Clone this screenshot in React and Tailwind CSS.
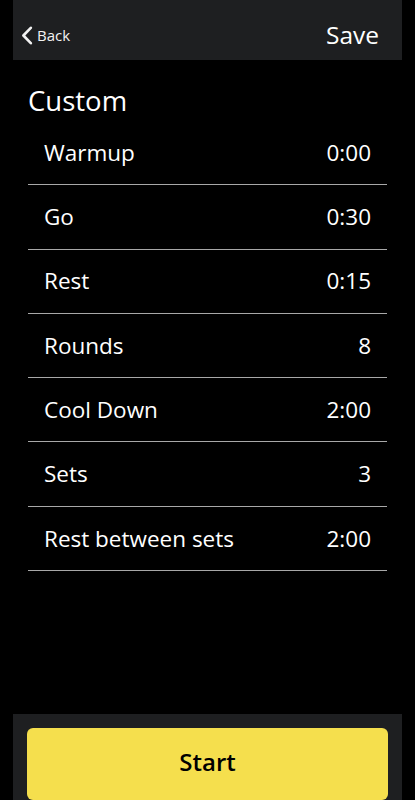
const rows = [
  { label: 'Warmup', value: '0:00' },
  { label: 'Go', value: '0:30' },
  { label: 'Rest', value: '0:15' },
  { label: 'Rounds', value: '8' },
  { label: 'Cool Down', value: '2:00' },
  { label: 'Sets', value: '3' },
  { label: 'Rest between sets', value: '2:00' },
]

export default function App() {
  return (
    <div
      className="h-[800px] bg-black text-white flex flex-col overflow-hidden"
      style={{ fontFamily: '"Open Sans", "Noto Sans", sans-serif' }}
    >
      {/* top bar */}
      <div className="mx-[13px] h-[60px] bg-[#1e1f21] flex items-center justify-between pt-[10px] pl-[8px] pr-[23px] shrink-0">
        <button className="flex items-center gap-[4px] text-[15px] text-[#f2f2f2]">
          <svg width="12" height="19" viewBox="0 0 12 19" fill="none" stroke="currentColor" strokeWidth="2.6" strokeLinecap="round" strokeLinejoin="round">
            <path d="M9.8 1.8 L2.4 9.5 L9.8 17.2" />
          </svg>
          <span>Back</span>
        </button>
        <button className="text-[24.5px] leading-none">Save</button>
      </div>

      {/* settings */}
      <div className="px-[28px] pt-[20px]">
        <h1 className="text-[27.5px] leading-[41px] font-normal">Custom</h1>
        <ul>
          {rows.map((r) => (
            <li
              key={r.label}
              className="h-[64.3px] flex items-center justify-between px-[16px] border-b border-[#a8a8a8] text-[22.5px]"
            >
              <span>{r.label}</span>
              <span>{r.value}</span>
            </li>
          ))}
        </ul>
      </div>

      {/* bottom */}
      <div className="mt-auto mx-[13px] h-[86px] bg-[#1e1f21] px-[14px] pt-[14px] shrink-0">
        <button className="w-full h-[72px] rounded-[6px] bg-[#f5df4d] text-black text-[24px] font-semibold pb-[4px]">
          Start
        </button>
      </div>
    </div>
  )
}
